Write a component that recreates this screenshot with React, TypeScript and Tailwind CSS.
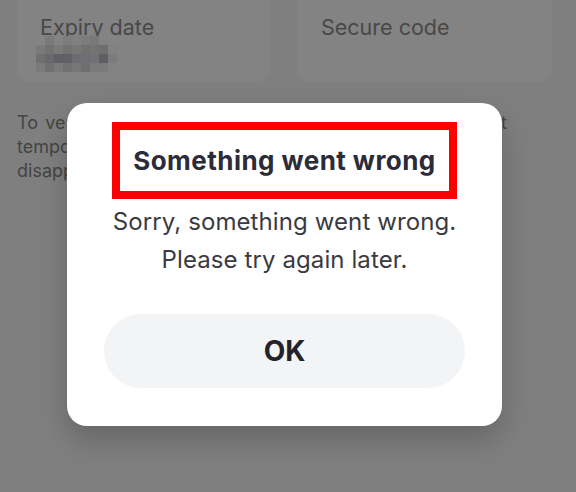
import React from "react";

const pixelRows: string[][] = [
  ["#848484", "#7a7a7a", "#838383", "#7c7c7c", "#808080", "#7c7c7c", "#787878", "#838383", "#848484"],
  ["#7a7a7a", "#727272", "#7a7a7a", "#727272", "#777777", "#707070", "#737373", "#6e6e6e", "#818181"],
  ["#707070", "#68686e", "#5f5f66", "#606068", "#6b6b70", "#6e6e74", "#707076", "#5e5e64", "#7b7b7b"],
  ["#7b7b7b", "#707070", "#7a7a7a", "#717171", "#777777", "#6f6f6f", "#7a7a7a", "#7b7b7b", "#828282"],
];

export default function App() {
  return (
    <div className="relative w-[576px] h-[492px] overflow-hidden bg-[#7f7f7f] font-['Inter',sans-serif]">
      {/* background page (dimmed) */}
      <div className="-mt-[12px] flex gap-[27px] pl-[17px]">
        <div className="h-[94px] w-[253px] rounded-[14px] bg-[#838383] pl-[23px] pt-[29px]">
          <div className="text-[21.5px] leading-[21.5px] text-[#484848]">Expiry date</div>
          <div className="-ml-[4px] -mt-[3px] flex flex-col">
            {pixelRows.map((row, i) => (
              <div key={i} className="flex">
                {row.map((c, j) => (
                  <div key={j} className="h-[9px] w-[9px]" style={{ backgroundColor: c }} />
                ))}
              </div>
            ))}
          </div>
        </div>
        <div className="h-[94px] w-[255px] rounded-[14px] bg-[#838383] pl-[24px] pt-[29px]">
          <div className="text-[21.5px] leading-[21.5px] text-[#484848]">Secure code</div>
        </div>
      </div>
      <div className="mt-[29px] pl-[17px] text-[18px] leading-[24px] text-[#444444]">
        <div className="w-[490px] text-justify [text-align-last:justify] whitespace-nowrap">
          To verify it&apos;s you, we show your card details for a short
        </div>
        <div className="whitespace-nowrap">temporary period. The details will then</div>
        <div className="whitespace-nowrap">disappear automatically.</div>
      </div>

      {/* modal */}
      <div className="absolute left-[67px] top-[103px] flex w-[435px] flex-col items-center rounded-[20px] bg-white pb-[38px] pt-[19px] shadow-[0_14px_30px_rgba(0,0,0,0.2)]">
        <div className="flex h-[77px] w-[345px] items-center justify-center border-[8px] border-[#ff0000]">
          <span className="whitespace-nowrap text-[26px] font-bold leading-none tracking-[0.45px] text-[#2c2c38]">
            Something went wrong
          </span>
        </div>
        <div className="mt-[4px] text-center text-[24px] leading-[38px] tracking-[0.1px] text-[#3a3a42]">
          <div>Sorry, something went wrong.</div>
          <div>Please try again later.</div>
        </div>
        <button className="mt-[35px] flex h-[74px] w-[361px] items-center justify-center rounded-full bg-[#f3f4f6] text-[28px] font-bold text-[#22222b]">
          OK
        </button>
      </div>
    </div>
  );
}
